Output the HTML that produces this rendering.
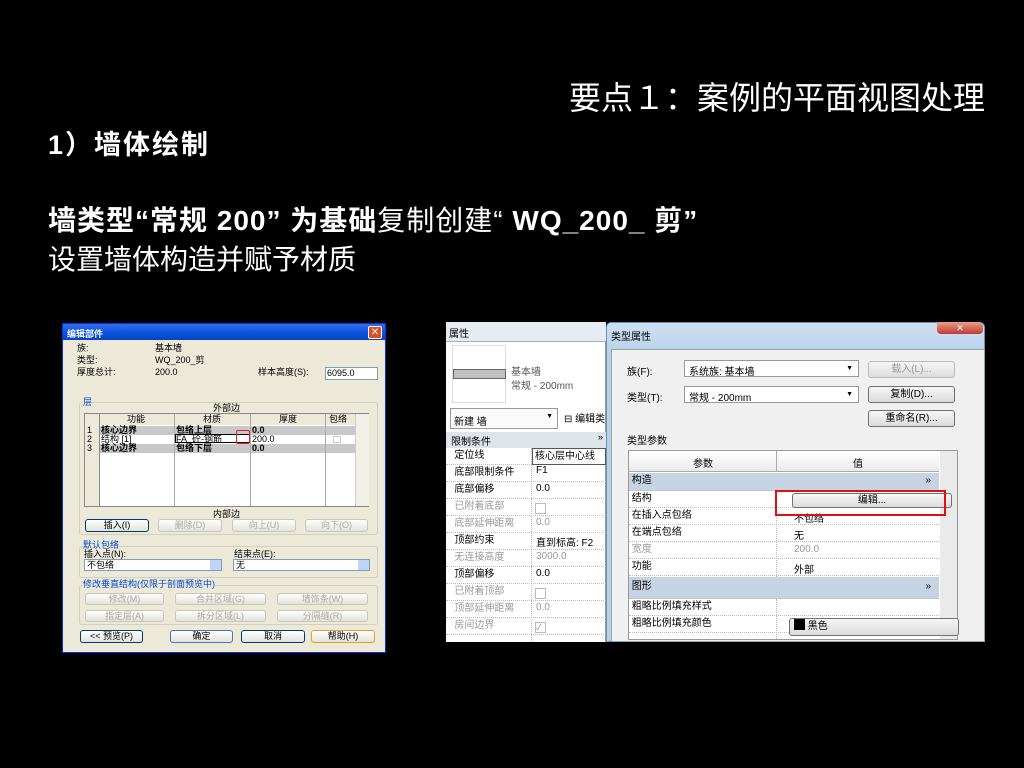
<!DOCTYPE html>
<html><head><meta charset="utf-8"><style>
*{margin:0;padding:0;box-sizing:border-box}
body{width:1024px;height:768px;background:#000;position:relative;overflow:hidden;font-family:"Liberation Sans","Noto Sans CJK SC",sans-serif;color:#fff}
.a{position:absolute;white-space:nowrap}
.s{font-size:9px;color:#000;font-family:"Liberation Sans","Noto Sans CJK SC",sans-serif;line-height:1}
.btn{position:absolute;border:1px solid #003c74;border-radius:3px;background:linear-gradient(#fff,#e3e2da);font-size:9px;color:#000;text-align:center;line-height:11px}
.dis{color:#aca899;border-color:#c9c7ba}
.grp{position:absolute;border:1px solid #d0d0bf;border-radius:3px}
.w7{position:absolute;border:1px solid #707070;border-radius:3px;background:linear-gradient(#f6f6f6,#dcdcdc);font-size:10px;color:#000;text-align:center}
.row{position:absolute;left:0;width:100%;border-bottom:1px dotted #bbb;font-size:10px;color:#000;height:17px;line-height:16px}
</style></head><body>
<div class="a" style="left:569px;top:78px;font-size:32px;line-height:40px">要点１：案例的平面视图处理</div>
<div class="a" style="left:48px;top:127px;font-size:27px;font-weight:bold;line-height:36px;letter-spacing:2px">1）墙体绘制</div>
<div class="a" style="left:48px;top:202px;font-size:28px;line-height:38px;letter-spacing:1px"><b>墙类型“常规 200” 为基础</b>复制创建“ <b>WQ_200_ 剪”</b></div>
<div class="a" style="left:48px;top:241px;font-size:28px;line-height:38px">设置墙体构造并赋予材质</div>

<!-- left dialog -->
<div class="a" style="left:62px;top:323px;width:324px;height:330px;background:#ece9d8;border:1px solid #0831d9">
 <div style="position:absolute;left:0;top:0;width:100%;height:16px;background:linear-gradient(#2d6ff0,#0a4fd8 60%,#0844c4)"></div>
 <div class="a" style="left:4px;top:3px;font-size:9px;font-weight:bold;color:#fff">编辑部件</div>
 <div class="a" style="left:305px;top:2px;width:14px;height:13px;background:#d9502d;border:1px solid #fff;border-radius:2px;color:#fff;font-size:10px;text-align:center;line-height:11px">✕</div>
</div>
<div class="a s" style="left:77px;top:344px">族:</div>
<div class="a s" style="left:77px;top:356px">类型:</div>
<div class="a s" style="left:77px;top:368px">厚度总计:</div>
<div class="a s" style="left:155px;top:344px">基本墙</div>
<div class="a s" style="left:155px;top:356px">WQ_200_剪</div>
<div class="a s" style="left:155px;top:368px">200.0</div>
<div class="a s" style="left:258px;top:368px">样本高度(S):</div>
<div class="a s" style="left:325px;top:367px;width:53px;height:13px;background:#fff;border:1px solid #7f9db9;padding:1px">6095.0</div>
<div class="grp" style="left:79px;top:402px;width:299px;height:133px"></div>
<div class="a s" style="left:83px;top:398px;color:#0046d5;background:#ece9d8">层</div>
<div class="a s" style="left:213px;top:404px">外部边</div>
<div class="a" style="left:84px;top:413px;width:285px;height:94px;background:#fff;border:1px solid #888"></div>
<div class="a" style="left:85px;top:414px;width:270px;height:11px;background:#ece9d8"></div>
<div class="a" style="left:85px;top:426px;width:270px;height:9px;background:#c8c8c8"></div>
<div class="a" style="left:85px;top:444px;width:270px;height:9px;background:#c8c8c8"></div>
<div class="a" style="left:85px;top:414px;width:14px;height:92px;background:#ece9d8"></div>
<div class="a" style="left:99px;top:414px;width:1px;height:92px;background:#888"></div>
<div class="a" style="left:174px;top:414px;width:1px;height:92px;background:#aaa"></div>
<div class="a" style="left:250px;top:414px;width:1px;height:92px;background:#aaa"></div>
<div class="a" style="left:325px;top:414px;width:1px;height:92px;background:#aaa"></div>
<div class="a" style="left:355px;top:414px;width:14px;height:92px;background:#f0efe8;border-left:1px solid #ccc"></div>
<div class="a s" style="left:127px;top:415px">功能</div><div class="a s" style="left:203px;top:415px">材质</div><div class="a s" style="left:279px;top:415px">厚度</div><div class="a s" style="left:329px;top:415px">包络</div>
<div class="a s" style="left:87px;top:426px">1</div><div class="a s" style="left:101px;top:426px;font-weight:bold">核心边界</div><div class="a s" style="left:176px;top:426px;font-weight:bold">包络上层</div><div class="a s" style="left:252px;top:426px;font-weight:bold">0.0</div>
<div class="a s" style="left:87px;top:435px">2</div><div class="a s" style="left:101px;top:435px">结构 [1]</div><div class="a s" style="left:175px;top:434px;width:75px;height:9px;border:1px solid #000">FA_砼-钢筋</div><div class="a s" style="left:252px;top:435px">200.0</div>
<div class="a" style="left:236px;top:430px;width:14px;height:14px;border:1px solid #e02020;border-radius:2px"></div>
<div class="a" style="left:333px;top:436px;width:8px;height:7px;background:#fff;border:1px solid #ccc"></div>
<div class="a s" style="left:87px;top:444px">3</div><div class="a s" style="left:101px;top:444px;font-weight:bold">核心边界</div><div class="a s" style="left:176px;top:444px;font-weight:bold">包络下层</div><div class="a s" style="left:252px;top:444px;font-weight:bold">0.0</div>
<div class="a s" style="left:213px;top:510px">内部边</div>
<div class="btn" style="left:85px;top:519px;width:64px;height:13px">插入(I)</div>
<div class="btn dis" style="left:158px;top:519px;width:64px;height:13px">删除(D)</div>
<div class="btn dis" style="left:232px;top:519px;width:64px;height:13px">向上(U)</div>
<div class="btn dis" style="left:305px;top:519px;width:63px;height:13px">向下(O)</div>
<div class="grp" style="left:79px;top:546px;width:299px;height:32px"></div>
<div class="a s" style="left:83px;top:541px;color:#0046d5;background:#ece9d8">默认包络</div>
<div class="a s" style="left:84px;top:550px">插入点(N):</div><div class="a s" style="left:234px;top:550px">结束点(E):</div>
<div class="a s" style="left:84px;top:559px;width:138px;height:12px;background:#fff;border:1px solid #7f9db9;padding:1px 2px">不包络</div>
<div class="a s" style="left:233px;top:559px;width:137px;height:12px;background:#fff;border:1px solid #7f9db9;padding:1px 2px">无</div>
<div class="a" style="left:210px;top:560px;width:11px;height:10px;background:#c1d3fb"></div>
<div class="a" style="left:358px;top:560px;width:11px;height:10px;background:#c1d3fb"></div>
<div class="grp" style="left:79px;top:585px;width:299px;height:40px"></div>
<div class="a s" style="left:83px;top:580px;color:#0046d5;background:#ece9d8">修改垂直结构(仅限于剖面预览中)</div>
<div class="btn dis" style="left:85px;top:593px;width:79px;height:12px">修改(M)</div>
<div class="btn dis" style="left:175px;top:593px;width:91px;height:12px">合并区域(G)</div>
<div class="btn dis" style="left:277px;top:593px;width:91px;height:12px">墙饰条(W)</div>
<div class="btn dis" style="left:85px;top:610px;width:79px;height:12px">指定层(A)</div>
<div class="btn dis" style="left:175px;top:610px;width:91px;height:12px">拆分区域(L)</div>
<div class="btn dis" style="left:277px;top:610px;width:91px;height:12px">分隔缝(R)</div>
<div class="btn" style="left:80px;top:630px;width:63px;height:13px">&lt;&lt; 预览(P)</div>
<div class="btn" style="left:170px;top:630px;width:63px;height:13px;border-color:#4a70c8">确定</div>
<div class="btn" style="left:241px;top:630px;width:64px;height:13px">取消</div>
<div class="btn" style="left:311px;top:630px;width:64px;height:13px;border-color:#e3a030">帮助(H)</div>

<!-- properties panel -->
<div class="a" style="left:446px;top:322px;width:160px;height:320px;background:#fff;border-right:1px solid #999"></div>
<div class="a" style="left:446px;top:322px;width:160px;height:20px;background:#e6ebf2;border-bottom:1px solid #aab"></div>
<div class="a" style="left:449px;top:325px;font-size:10px;color:#000">属性</div>
<div class="a" style="left:452px;top:345px;width:54px;height:58px;border:1px solid #ddd"></div>
<div class="a" style="left:453px;top:369px;width:53px;height:10px;background:#c0c0c0;border:1px solid #666"></div>
<div class="a" style="left:511px;top:363px;font-size:10px;color:#555">基本墙</div>
<div class="a" style="left:511px;top:377px;font-size:10px;color:#555">常规 - 200mm</div>
<div class="a" style="left:450px;top:408px;width:108px;height:21px;border:1px solid #999;background:#fafafa;font-size:10px;color:#000;padding:4px 3px">新建 墙<span style="position:absolute;right:4px;font-size:7px">▼</span></div>
<div class="a" style="left:564px;top:410px;font-size:10px;color:#000">⊟ 编辑类</div>
<div class="a" style="left:446px;top:432px;width:160px;height:16px;background:#dfe4ea"></div>
<div class="a" style="left:451px;top:433px;font-size:10px;color:#000">限制条件</div>
<div class="a" style="left:598px;top:432px;font-size:9px;color:#000">»</div>
<div class="a" style="left:446px;top:448px;width:160px;height:194px">
 <div class="row" style="top:0">&nbsp;&nbsp;&nbsp;定位线</div>
 <div class="row" style="top:17px">&nbsp;&nbsp;&nbsp;底部限制条件</div>
 <div class="row" style="top:34px">&nbsp;&nbsp;&nbsp;底部偏移</div>
 <div class="row" style="top:51px;color:#999">&nbsp;&nbsp;&nbsp;已附着底部</div>
 <div class="row" style="top:68px;color:#999">&nbsp;&nbsp;&nbsp;底部延伸距离</div>
 <div class="row" style="top:85px">&nbsp;&nbsp;&nbsp;顶部约束</div>
 <div class="row" style="top:102px;color:#999">&nbsp;&nbsp;&nbsp;无连接高度</div>
 <div class="row" style="top:119px">&nbsp;&nbsp;&nbsp;顶部偏移</div>
 <div class="row" style="top:136px;color:#999">&nbsp;&nbsp;&nbsp;已附着顶部</div>
 <div class="row" style="top:153px;color:#999">&nbsp;&nbsp;&nbsp;顶部延伸距离</div>
 <div class="row" style="top:170px;color:#999">&nbsp;&nbsp;&nbsp;房间边界</div>
 <div class="a" style="left:85px;top:0;width:1px;height:194px;border-left:1px dotted #bbb"></div>
 <div class="a" style="left:86px;top:0;width:74px;height:17px;border:1px solid #555;font-size:10px;color:#000;padding-left:2px;line-height:15px">核心层中心线</div>
 <div class="a" style="left:90px;top:17px;font-size:10px;color:#000">F1</div>
 <div class="a" style="left:90px;top:35px;font-size:10px;color:#000">0.0</div>
 <div class="a" style="left:89px;top:55px;width:11px;height:11px;border:1px solid #bbb"></div>
 <div class="a" style="left:90px;top:69px;font-size:10px;color:#999">0.0</div>
 <div class="a" style="left:90px;top:86px;font-size:10px;color:#000">直到标高: F2</div>
 <div class="a" style="left:90px;top:103px;font-size:10px;color:#999">3000.0</div>
 <div class="a" style="left:90px;top:120px;font-size:10px;color:#000">0.0</div>
 <div class="a" style="left:89px;top:140px;width:11px;height:11px;border:1px solid #bbb"></div>
 <div class="a" style="left:90px;top:154px;font-size:10px;color:#999">0.0</div>
 <div class="a" style="left:89px;top:174px;width:11px;height:11px;border:1px solid #bbb;font-size:8px;color:#999;line-height:10px">✓</div>
</div>

<!-- type properties dialog -->
<div class="a" style="left:606px;top:322px;width:379px;height:320px;background:linear-gradient(#cfe0f3,#b9d1ea 30px,#b9d1ea);border:1px solid #6d8fb5;border-radius:5px 5px 0 0"></div>
<div class="a" style="left:611px;top:328px;font-size:10px;color:#000">类型属性</div>
<div class="a" style="left:937px;top:322px;width:46px;height:12px;background:linear-gradient(#e8a090,#c0392b);border-radius:0 4px 4px 4px;color:#fff;font-size:9px;text-align:center;line-height:12px">✕</div>
<div class="a" style="left:611px;top:349px;width:374px;height:293px;background:#f0f0f0;border:1px solid #8aa"></div>
<div class="a" style="left:627px;top:363px;font-size:10px;color:#000">族(F):</div>
<div class="a" style="left:627px;top:389px;font-size:10px;color:#000">类型(T):</div>
<div class="a" style="left:684px;top:360px;width:175px;height:17px;border:1px solid #999;background:#fff;font-size:10px;color:#000;padding:2px 4px">系统族: 基本墙<span style="position:absolute;right:5px;font-size:7px;top:4px">▼</span></div>
<div class="a" style="left:684px;top:386px;width:175px;height:17px;border:1px solid #999;background:#fff;font-size:10px;color:#000;padding:2px 4px">常规 - 200mm<span style="position:absolute;right:5px;font-size:7px;top:4px">▼</span></div>
<div class="w7" style="left:868px;top:361px;width:87px;height:17px;color:#999;border-color:#bbb;line-height:15px">载入(L)...</div>
<div class="w7" style="left:868px;top:386px;width:87px;height:17px;line-height:15px">复制(D)...</div>
<div class="w7" style="left:868px;top:410px;width:87px;height:17px;line-height:15px">重命名(R)...</div>
<div class="a" style="left:627px;top:432px;font-size:10px;color:#000">类型参数</div>
<div class="a" style="left:628px;top:450px;width:330px;height:190px;background:#fff;border:1px solid #999"></div>
<div class="a" style="left:629px;top:451px;width:310px;height:21px;background:linear-gradient(#fff,#eaeaea);border-bottom:1px solid #aaa"></div>
<div class="a" style="left:776px;top:451px;width:1px;height:21px;background:#aaa"></div>
<div class="a" style="left:693px;top:455px;font-size:10px;color:#000">参数</div>
<div class="a" style="left:853px;top:455px;font-size:10px;color:#000">值</div>
<div class="a" style="left:940px;top:451px;width:17px;height:188px;background:#eaeaea"></div>
<div class="a" style="left:629px;top:473px;width:310px;height:167px">
 <div class="row" style="top:0;background:#c5d3e2;height:18px">&nbsp;构造<span style="position:absolute;right:8px">»</span></div>
 <div class="row" style="top:18px">&nbsp;结构</div>
 <div class="row" style="top:35px">&nbsp;在插入点包络</div>
 <div class="row" style="top:52px">&nbsp;在端点包络</div>
 <div class="row" style="top:69px;color:#999">&nbsp;宽度</div>
 <div class="row" style="top:86px">&nbsp;功能</div>
 <div class="row" style="top:104px;background:#c5d3e2;height:22px;line-height:20px">&nbsp;图形<span style="position:absolute;right:8px">»</span></div>
 <div class="row" style="top:126px">&nbsp;粗略比例填充样式</div>
 <div class="row" style="top:143px">&nbsp;粗略比例填充颜色</div>
 <div class="a" style="left:147px;top:18px;width:1px;height:86px;border-left:1px dotted #bbb"></div>
 <div class="a" style="left:147px;top:126px;width:1px;height:40px;border-left:1px dotted #bbb"></div>
 <div class="w7" style="left:163px;top:20px;width:160px;height:15px;line-height:13px">编辑...</div>
 <div class="a" style="left:165px;top:37px;font-size:10px;color:#000">不包络</div>
 <div class="a" style="left:165px;top:54px;font-size:10px;color:#000">无</div>
 <div class="a" style="left:165px;top:71px;font-size:10px;color:#999">200.0</div>
 <div class="a" style="left:165px;top:88px;font-size:10px;color:#000">外部</div>
 <div class="w7" style="left:160px;top:145px;width:170px;height:18px;text-align:left;padding-left:4px;line-height:16px"><span style="display:inline-block;width:11px;height:11px;background:#000;vertical-align:-1px"></span> 黑色</div>
</div>
<div class="a" style="left:775px;top:490px;width:171px;height:26px;border:2px solid #e01010"></div>
</body></html>
